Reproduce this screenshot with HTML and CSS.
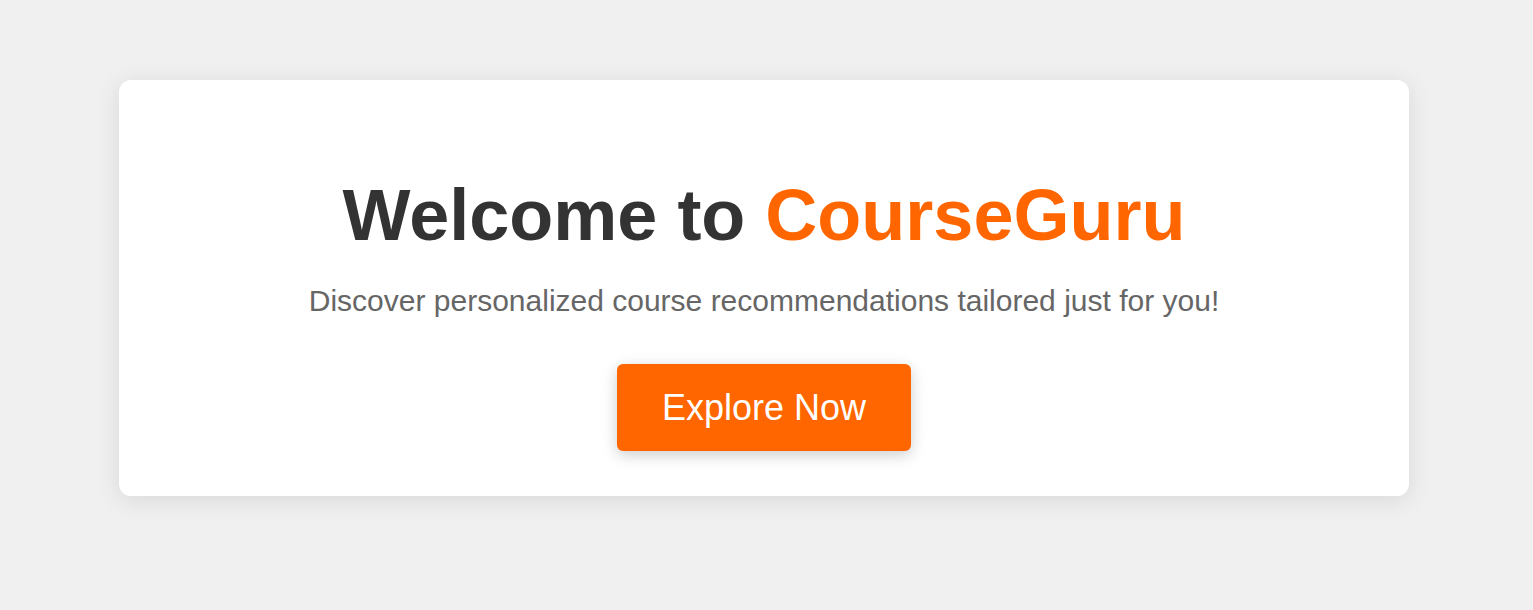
FILE: index.html
```html
<!DOCTYPE html>
<html lang="en">
<head>
<meta charset="utf-8">
<title>CourseGuru</title>
<link rel="stylesheet" href="styles.css">
</head>
<body>
<section class="hero">
  <h1 class="hero-title">Welcome to <span class="brand">CourseGuru</span></h1>
  <p class="hero-text">Discover personalized course recommendations tailored just for you!</p>
  <button class="hero-btn">Explore Now</button>
</section>
</body>
</html>
```
FILE: styles.css
```css
html, body {
  margin: 0;
  padding: 0;
}
html {
  background: #f0f0f0;
}
body {
  background: #f0f0f0;
  font-family: "Liberation Sans", Arial, sans-serif;
  padding: 80px 0 80px 119px;
  min-height: 610px;
  box-sizing: border-box;
}
.hero {
  width: 1290px;
  box-sizing: border-box;
  background: #ffffff;
  border-radius: 12px;
  box-shadow: 0 4px 24px rgba(0, 0, 0, 0.1);
  padding: 94px 40px 45px;
  display: flex;
  flex-direction: column;
  align-items: center;
  text-align: center;
}
.hero-title {
  margin: 0;
  font-size: 72px;
  line-height: 1.15;
  font-weight: bold;
  color: #333333;
}
.brand {
  color: #ff6600;
}
.hero-text {
  margin: 27px 0 0;
  font-size: 30px;
  line-height: 1.15;
  color: #666666;
}
.hero-btn {
  margin-top: 46px;
  font-family: "Liberation Sans", Arial, sans-serif;
  font-size: 36px;
  line-height: 41px;
  padding: 23px 45px;
  color: #ffffff;
  background: #ff6600;
  border: none;
  border-radius: 6px;
  box-shadow: 0 4px 15px rgba(0, 0, 0, 0.2);
  cursor: pointer;
}
```
